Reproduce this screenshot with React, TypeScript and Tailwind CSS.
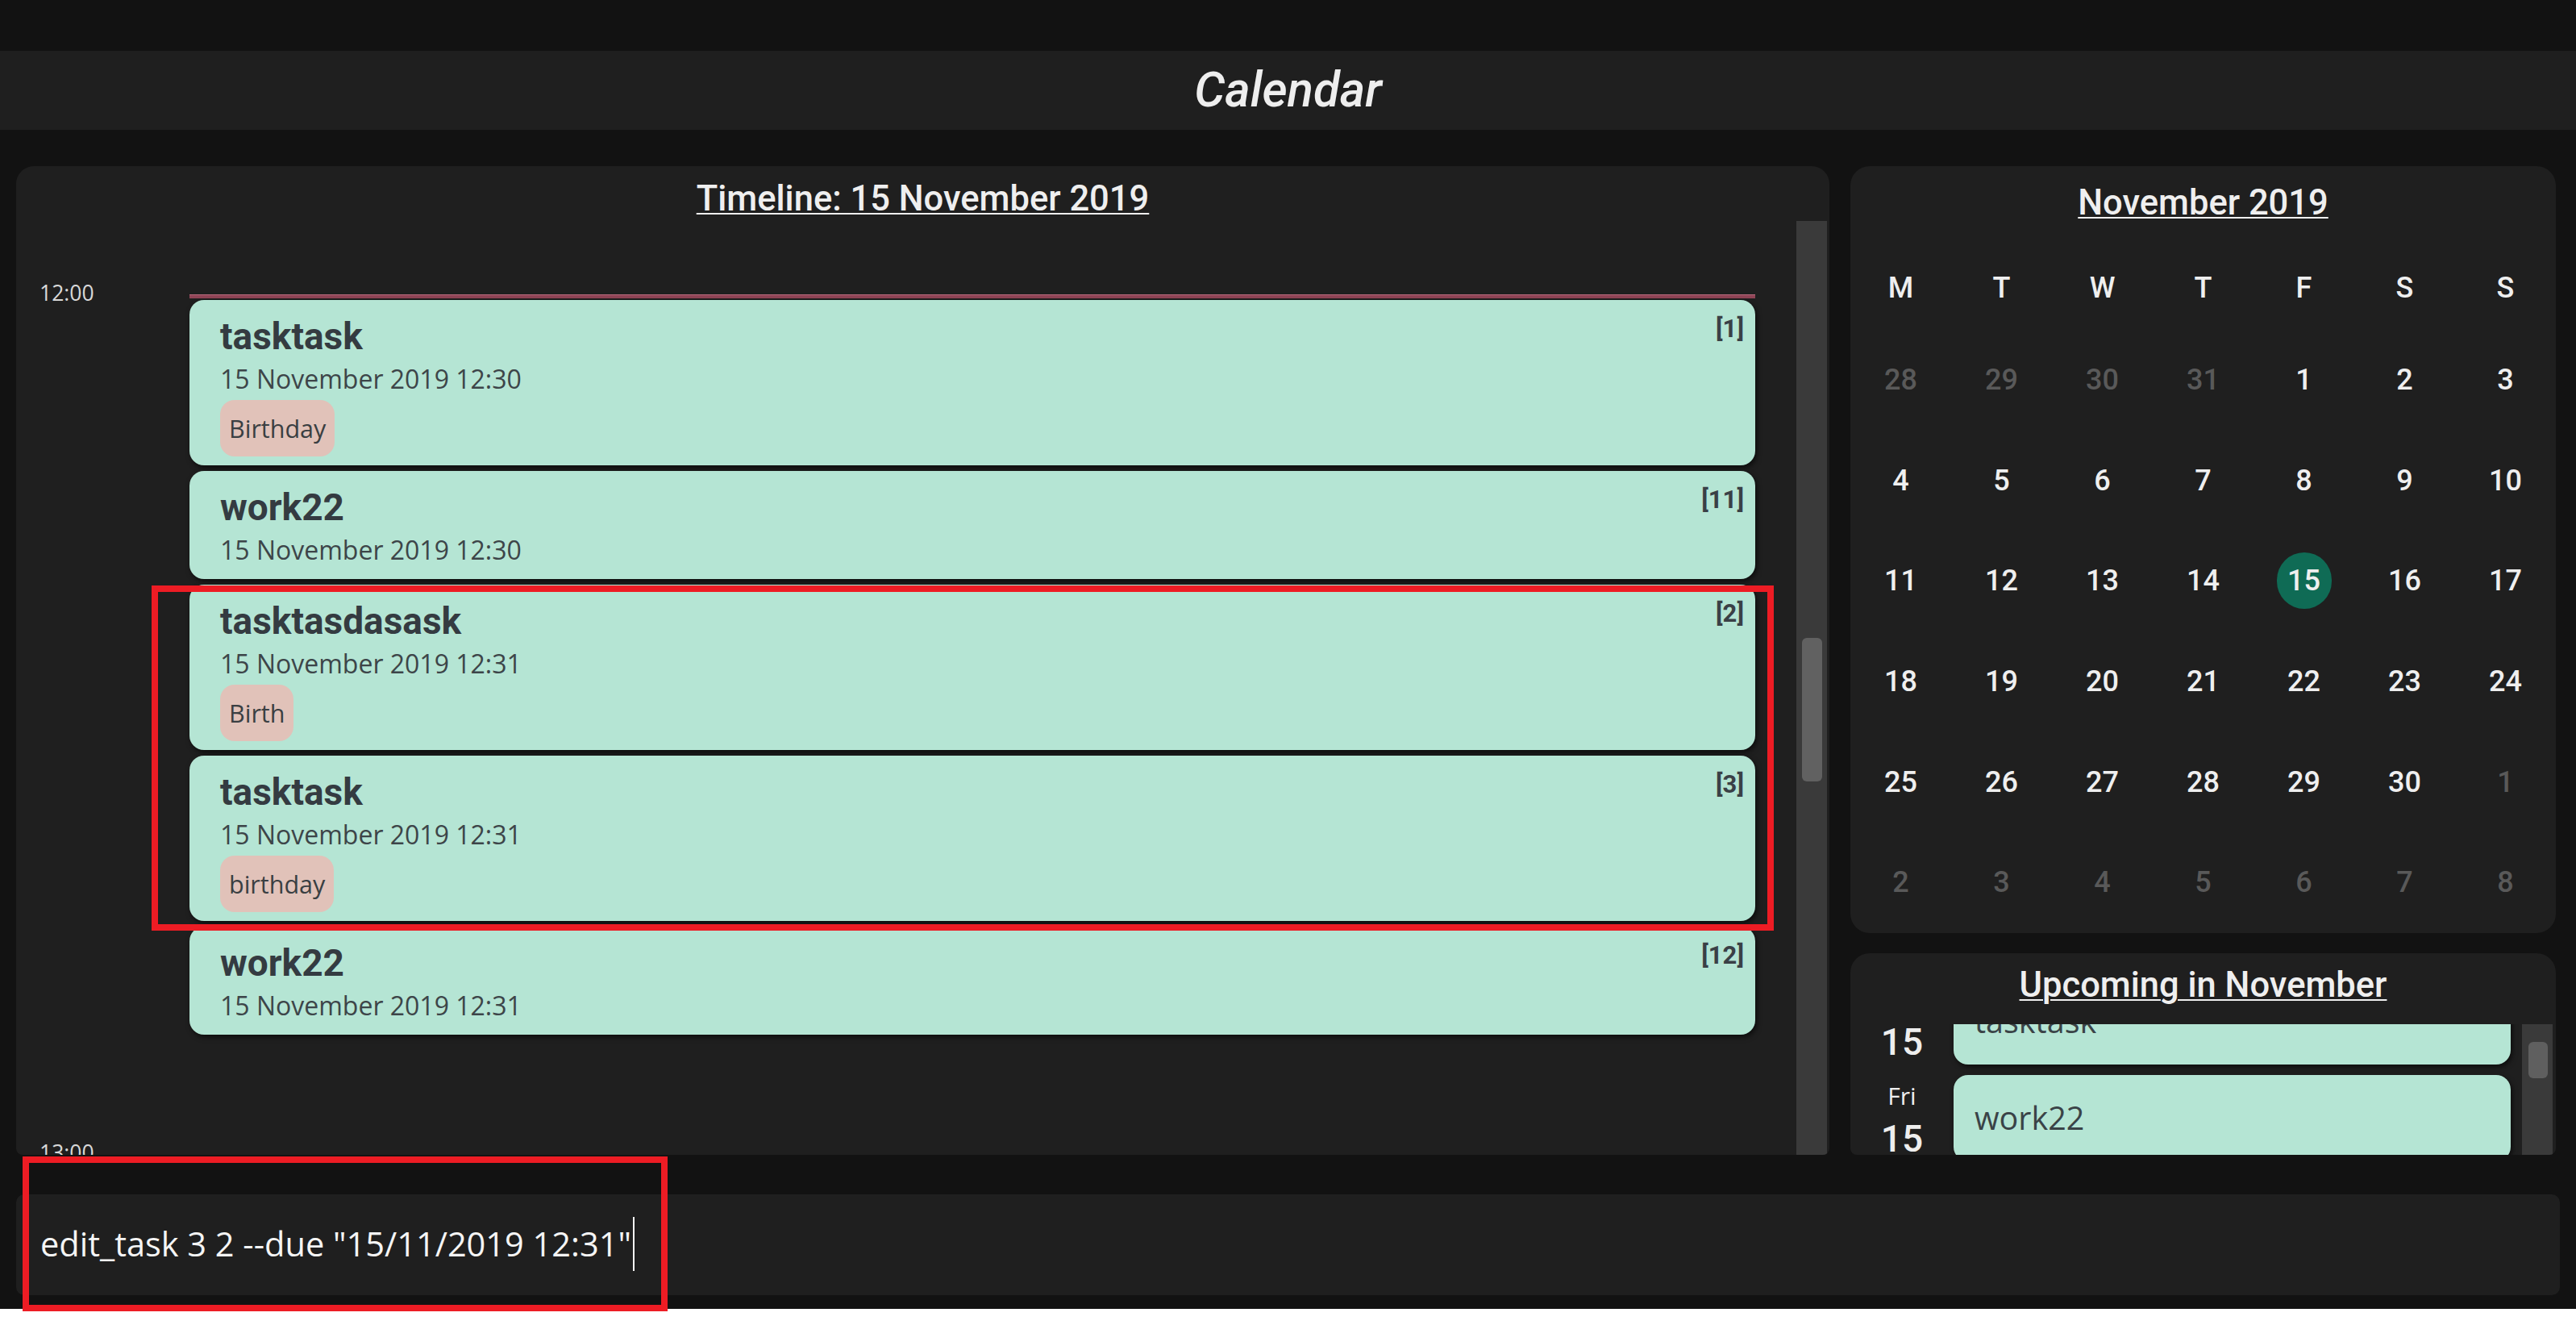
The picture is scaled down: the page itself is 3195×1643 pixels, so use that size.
import React from 'react';

type Task = { title: string; due: string; tag?: string; id: number };

const TASKS: Task[] = [
  { title: 'tasktask', due: '15 November 2019 12:30', tag: 'Birthday', id: 1 },
  { title: 'work22', due: '15 November 2019 12:30', id: 11 },
  { title: 'tasktasdasask', due: '15 November 2019 12:31', tag: 'Birth', id: 2 },
  { title: 'tasktask', due: '15 November 2019 12:31', tag: 'birthday', id: 3 },
  { title: 'work22', due: '15 November 2019 12:31', id: 12 },
];

const WEEKDAYS = ['M', 'T', 'W', 'T', 'F', 'S', 'S'];

// [day, inCurrentMonth]
const WEEKS: [number, boolean][][] = [
  [[28, false], [29, false], [30, false], [31, false], [1, true], [2, true], [3, true]],
  [[4, true], [5, true], [6, true], [7, true], [8, true], [9, true], [10, true]],
  [[11, true], [12, true], [13, true], [14, true], [15, true], [16, true], [17, true]],
  [[18, true], [19, true], [20, true], [21, true], [22, true], [23, true], [24, true]],
  [[25, true], [26, true], [27, true], [28, true], [29, true], [30, true], [1, false]],
  [[2, false], [3, false], [4, false], [5, false], [6, false], [7, false], [8, false]],
];

const UPCOMING = [
  { day: 'Fri', date: '15', title: 'tasktask' },
  { day: 'Fri', date: '15', title: 'work22' },
  { day: 'Fri', date: '15', title: 'tasktasdasask' },
];

function TaskCard({ task }: { task: Task }) {
  return (
    <div
      className={`rounded-[18px] bg-[#b5e5d4] pl-[38px] pr-[14px] pt-[18px] shadow-[2px_3px_6px_rgba(0,0,0,0.6)] ${
        task.tag ? 'pb-[11px]' : 'pb-[14px]'
      }`}
    >
      <div className="flex items-start justify-between">
        <div className="font-['Roboto',sans-serif] text-[46px] font-bold leading-[54px] text-[#343b41]">
          {task.title}
        </div>
        <div className="font-['Roboto',sans-serif] text-[31px] font-bold leading-[36px] text-[#3a4046]">
          [{task.id}]
        </div>
      </div>
      <div className="mt-[4px] font-['Open_Sans',sans-serif] text-[32px] leading-[44px] text-[#3d4549]">
        {task.due}
      </div>
      {task.tag && (
        <div className="mt-[4px] flex">
          <span className="rounded-[18px] bg-[#e1c2b9] px-[11px] py-[15px] font-['Open_Sans',sans-serif] text-[30.5px] leading-[40px] text-[#3a3f42]">
            {task.tag}
          </span>
        </div>
      )}
    </div>
  );
}

function Timeline() {
  return (
    <section className="flex w-[2249px] flex-col overflow-hidden rounded-t-[22px] rounded-b-[8px] bg-[#1f1f1f]">
      <h2 className="pt-[16px] text-center font-['Roboto',sans-serif] text-[43.5px] font-medium leading-[50px] text-[#efefef] underline decoration-2 underline-offset-[3px]">
        Timeline: 15 November 2019
      </h2>
      <div className="mt-[2px] flex min-h-0 flex-1">
        {/* scrolled timeline body */}
        <div className="flex-1 overflow-hidden pt-[73px]">
          <div className="flex h-[1066px]">
            <div className="w-[215px] pl-[29px] font-['Open_Sans',sans-serif] text-[26.5px] leading-[32px] text-[#d8d8d8]">
              12:00
            </div>
            <div className="flex w-[1942px] flex-col">
              <div className="mt-[18px] h-[5px] border-t border-[#b86a7c] bg-[#8f4456]" />
              <div className="mt-[2px] flex flex-col gap-[7px]">
                {TASKS.map((t, i) => (
                  <TaskCard key={i} task={t} />
                ))}
              </div>
            </div>
          </div>
          <div className="pl-[29px] font-['Open_Sans',sans-serif] text-[26.5px] leading-[32px] text-[#d8d8d8]">
            13:00
          </div>
        </div>
        {/* scrollbar */}
        <div className="mr-[3px] w-[38px] bg-[#3a3a3a] pl-[7px] pt-[517px]">
          <div className="h-[178px] w-[25px] rounded-[6px] bg-[#616161]" />
        </div>
      </div>
    </section>
  );
}

function MonthCalendar() {
  return (
    <section className="flex h-[951px] flex-col rounded-[24px] bg-[#1f1f1f]">
      <h2 className="pt-[21px] text-center font-['Roboto',sans-serif] text-[43.5px] font-medium leading-[50px] text-[#efefef] underline decoration-2 underline-offset-[3px]">
        November 2019
      </h2>
      <div className="mt-[28px] grid grid-cols-7 font-['Roboto',sans-serif] text-[36px] font-medium">
        {WEEKDAYS.map((d, i) => (
          <div key={i} className="flex h-[104px] items-center justify-center text-[#efefef]">
            {d}
          </div>
        ))}
        {WEEKS.flat().map(([day, current], i) => {
          const today = current && day === 15;
          return (
            <div key={i} className="flex h-[124.6px] items-center justify-center">
              {today ? (
                <span className="flex h-[70px] w-[68px] items-center justify-center rounded-full bg-[#0f6b55] text-[#efefef]">
                  {day}
                </span>
              ) : (
                <span className={current ? 'text-[#efefef]' : 'text-[#595959]'}>{day}</span>
              )}
            </div>
          );
        })}
      </div>
    </section>
  );
}

function Upcoming() {
  return (
    <section className="flex flex-1 flex-col overflow-hidden rounded-t-[24px] rounded-b-[8px] bg-[#1f1f1f]">
      <h2 className="pt-[15px] text-center font-['Roboto',sans-serif] text-[43.5px] font-medium leading-[50px] text-[#efefef] underline decoration-2 underline-offset-[3px]">
        Upcoming in November
      </h2>
      <div className="mt-[23px] flex min-h-0 flex-1">
        <div className="flex-1 overflow-hidden">
          <div className="-mt-[57px] flex flex-col gap-[13px]">
            {UPCOMING.map((u, i) => (
              <div key={i} className="flex h-[107px]">
                <div className="flex w-[128px] flex-col items-center pt-[8px] text-[#eeeeee]">
                  <span className="font-['Open_Sans',sans-serif] text-[30px] leading-[36px]">{u.day}</span>
                  <span className="mt-[8px] font-['Roboto',sans-serif] text-[46px] font-medium leading-[54px]">
                    {u.date}
                  </span>
                </div>
                <div className="mr-[14px] flex flex-1 items-center rounded-[18px] bg-[#b5e5d4] pl-[26px] shadow-[2px_3px_6px_rgba(0,0,0,0.6)]">
                  <span className="font-['Open_Sans',sans-serif] text-[39.5px] leading-[53px] text-[#3a4347]">
                    {u.title}
                  </span>
                </div>
              </div>
            ))}
          </div>
        </div>
        <div className="mr-[4px] w-[38px] bg-[#3a3a3a] pl-[8px] pt-[22px]">
          <div className="h-[45px] w-[24px] rounded-[6px] bg-[#5f5f5f]" />
        </div>
      </div>
    </section>
  );
}

export default function App() {
  return (
    <div className="relative h-[1643px] w-[3195px] bg-white">
      <div className="flex h-[1623px] flex-col bg-[#121212]">
        <div className="h-[63px]" />
        <header className="flex h-[98px] items-center justify-center bg-[#1f1f1f]">
          <h1 className="font-['Roboto',sans-serif] text-[60px] font-medium italic text-[#eeeeee]">Calendar</h1>
        </header>

        <main className="flex h-[1271px] gap-[26px] pl-[20px] pr-[25px] pt-[45px]">
          <Timeline />
          <div className="flex w-[875px] flex-col gap-[25px]">
            <MonthCalendar />
            <Upcoming />
          </div>
        </main>

        {/* command box */}
        <div className="px-[20px] pt-[49px]">
          <div className="flex h-[125px] items-center rounded-[10px] bg-[#1f1f1f] pb-[2px] pl-[30px]">
            <span className="font-['Open_Sans',sans-serif] text-[41.5px] text-[#f5f5f5]">
              edit_task 3 2 --due "15/11/2019 12:31"
            </span>
            <span className="ml-[2px] h-[67px] w-[2px] bg-[#f5f5f5]" />
          </div>
        </div>
      </div>

      {/* red annotation boxes */}
      <div className="absolute left-[188px] top-[726px] h-[428px] w-[2012px] border-[8px] border-[#ed1c24]" />
      <div className="absolute left-[28px] top-[1434px] h-[192px] w-[800px] border-[8px] border-[#ed1c24]" />
    </div>
  );
}
